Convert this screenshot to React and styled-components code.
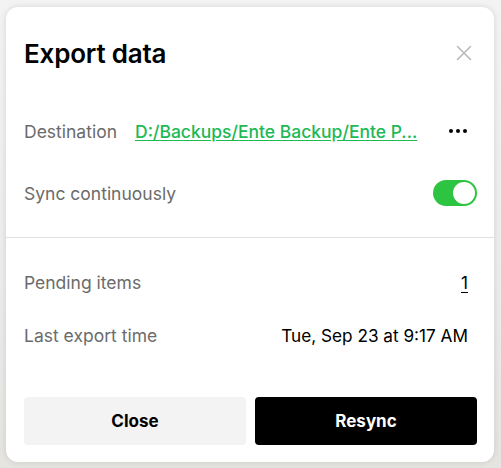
import React, {useState} from 'react';
import styled, {createGlobalStyle} from 'styled-components';

const GlobalStyle = createGlobalStyle`
  html, body {
    margin: 0;
    padding: 0;
    background: #ededed;
  }
  body {
    font-family: Inter, "Noto Sans", "Liberation Sans", sans-serif;
    -webkit-font-smoothing: antialiased;
  }
`;

const PageSt = styled.div`
  width: 501px;
  height: 468px;
  padding: 7px 7px 6px 6px;
  box-sizing: border-box;
  background: linear-gradient(180deg, #f3f3f3 0%, #ececec 60%, #e6e4e0 100%);
`;

const DialogSt = styled.div`
  width: 488px;
  height: 455px;
  box-sizing: border-box;
  background: #fff;
  border-radius: 12px;
  box-shadow: 0 0 6px rgba(0, 0, 0, 0.12);
  display: flex;
  flex-direction: column;
`;

const HeaderSt = styled.div`
  display: flex;
  align-items: center;
  justify-content: space-between;
  padding: 30px 20px 0 18px;
  height: 32px;
`;

const TitleSt = styled.h2`
  margin: 0;
  font-size: 26px;
  font-weight: 600;
  color: #000;
  letter-spacing: -0.2px;
`;

const CloseIconSt = styled.button`
  border: none;
  background: none;
  padding: 0;
  width: 20px;
  height: 20px;
  display: flex;
  align-items: center;
  justify-content: center;
  color: #b9b9b9;
`;

const SectionSt = styled.div`
  padding: ${p => p.$pad};
  display: flex;
  flex-direction: column;
`;

const RowSt = styled.div`
  display: flex;
  align-items: center;
  height: ${p => p.$h}px;
  padding: 0 ${p => p.$right || 18}px 0 18px;
  gap: 18px;
`;

const LabelSt = styled.span`
  font-size: 17.5px;
  color: #6b6b6b;
  flex: ${p => (p.$grow ? 1 : 'none')};
`;

const LinkSt = styled.a`
  font-size: 17.5px;
  font-weight: 500;
  color: #1db954;
  text-decoration: underline;
  text-underline-offset: 2px;
  white-space: nowrap;
  flex: none;
`;

const DotsSt = styled.span`
  margin-left: auto;
  display: flex;
  gap: 3px;
  margin-right: 9px;

  i {
    width: 4px;
    height: 4px;
    border-radius: 50%;
    background: #000;
  }
`;

const ToggleSt = styled.button`
  width: 44px;
  height: 26px;
  border-radius: 13px;
  border: none;
  padding: 2px;
  background: ${p => (p.$on ? '#2dc441' : '#ccc')};
  display: flex;
  justify-content: ${p => (p.$on ? 'flex-end' : 'flex-start')};
  align-items: center;
  box-sizing: border-box;

  span {
    width: 22px;
    height: 22px;
    border-radius: 50%;
    background: #fff;
  }
`;

const DividerSt = styled.hr`
  margin: 0;
  border: none;
  border-top: 1px solid #e0e0e0;
`;

const ValueSt = styled.span`
  font-size: 17.2px;
  font-weight: 400;
  color: #000;
  text-decoration: ${p => (p.$underline ? 'underline' : 'none')};
  text-underline-offset: 3px;
`;

const ButtonRowSt = styled.div`
  margin-top: auto;
  display: flex;
  gap: 9px;
  padding: 0 17px 17px 18px;
`;

const ButtonSt = styled.button`
  flex: 1;
  height: 48px;
  border: none;
  border-radius: 4px;
  font-family: inherit;
  font-size: 17px;
  font-weight: 700;
  background: ${p => (p.$primary ? '#000' : '#f3f3f3')};
  color: ${p => (p.$primary ? '#fff' : '#000')};
`;

// the full path is long, the dialog shows it shortened
const destination = 'D:/Backups/Ente Backup/Ente P...';

export default function App() {
  const [sync, setSync] = useState(true);

  return (
    <>
      <GlobalStyle />
      <PageSt>
        <DialogSt>
          <HeaderSt>
            <TitleSt>Export data</TitleSt>
            <CloseIconSt aria-label="close">
              <svg width="16" height="16" viewBox="0 0 16 16">
                <path
                  d="M1.5 1.5L14.5 14.5M14.5 1.5L1.5 14.5"
                  stroke="currentColor"
                  strokeWidth="1.6"
                  strokeLinecap="round"
                />
              </svg>
            </CloseIconSt>
          </HeaderSt>

          <SectionSt $pad="31px 0 13px">
            <RowSt $h={62}>
              <LabelSt>Destination</LabelSt>
              <LinkSt href="#">{destination}</LinkSt>
              <DotsSt>
                <i />
                <i />
                <i />
              </DotsSt>
            </RowSt>
            <RowSt $h={62} $right={17}>
              <LabelSt $grow>Sync continuously</LabelSt>
              <ToggleSt $on={sync} onClick={() => setSync(!sync)}>
                <span />
              </ToggleSt>
            </RowSt>
          </SectionSt>

          <DividerSt />

          <SectionSt $pad="18px 0 0">
            <RowSt $h={53} $right={26}>
              <LabelSt $grow>Pending items</LabelSt>
              <ValueSt $underline>1</ValueSt>
            </RowSt>
            <RowSt $h={53} $right={26}>
              <LabelSt $grow>Last export time</LabelSt>
              <ValueSt>Tue, Sep 23 at 9:17 AM</ValueSt>
            </RowSt>
          </SectionSt>

          <ButtonRowSt>
            <ButtonSt>Close</ButtonSt>
            <ButtonSt $primary>Resync</ButtonSt>
          </ButtonRowSt>
        </DialogSt>
      </PageSt>
    </>
  );
}
